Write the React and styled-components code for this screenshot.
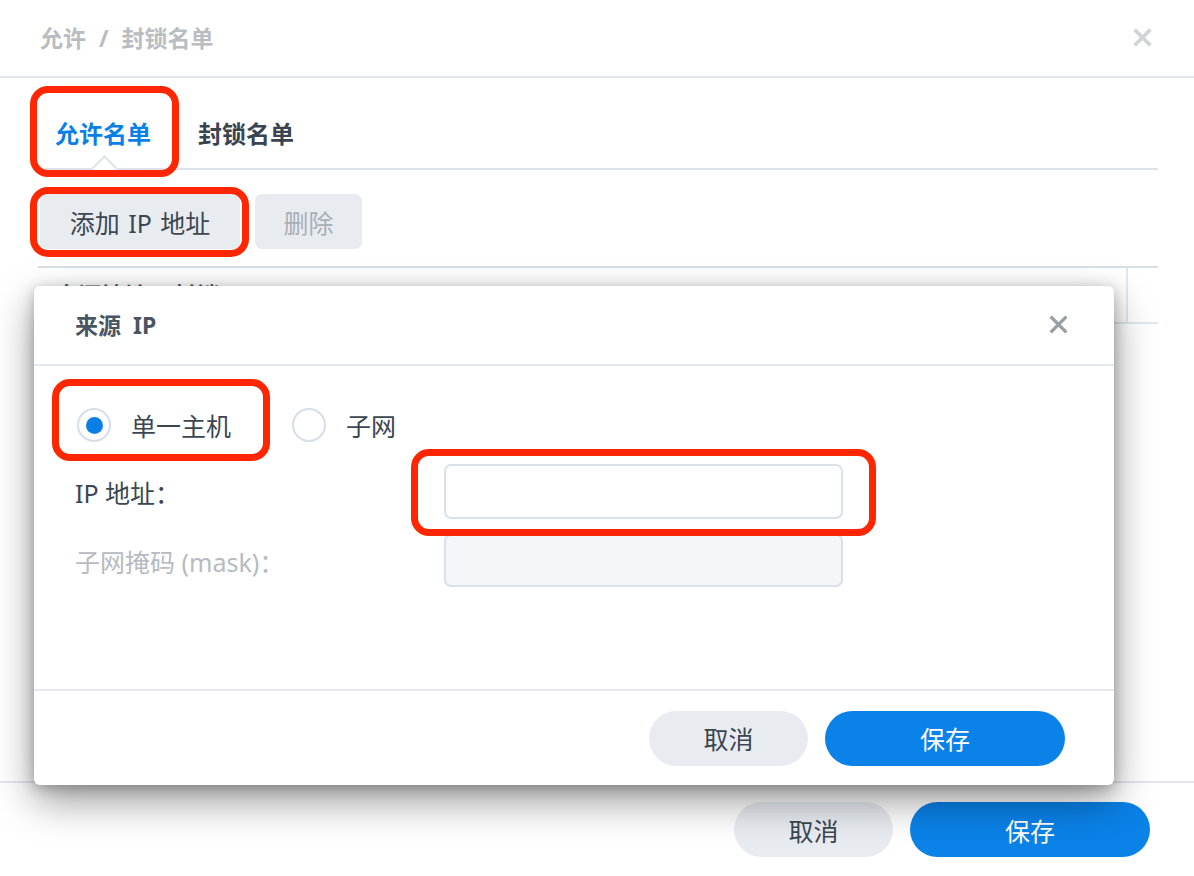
import React from 'react';
import styled, { createGlobalStyle } from 'styled-components';

const GlobalStyle = createGlobalStyle`
  html, body {
    margin: 0;
    padding: 0;
    background: #fff;
  }
  body {
    font-family: "Noto Sans", "Noto Sans CJK SC", sans-serif;
    color: #3c4651;
  }
  * {
    box-sizing: border-box;
  }
`;

const CloseIcon = ({ size = 22, color = '#d3d5d8', stroke = 3.6 }) => (
  <svg width={size} height={size} viewBox="0 0 24 24" fill="none">
    <path d="M3 3L21 21M21 3L3 21" stroke={color} strokeWidth={stroke} strokeLinecap="butt" />
  </svg>
);

export default function App() {
  return (
    <>
      <GlobalStyle />
      <Page>
        <WindowHeader>
          <WindowTitle>允许 / 封锁名单</WindowTitle>
          <IconButton>
            <CloseIcon size={21} color="#d2d4d7" stroke={4.2} />
          </IconButton>
        </WindowHeader>

        <WindowBody>
          <TabBar>
            <Marked $inset="8px -11px -9px -8px">
              <Tab $active>允许名单</Tab>
            </Marked>
            <Tab>封锁名单</Tab>
          </TabBar>

          <Toolbar>
            <Marked $inset="-7px -9px -8px -10px">
              <ToolButton>添加 IP 地址</ToolButton>
            </Marked>
            <ToolButton $disabled>删除</ToolButton>
          </Toolbar>

          <TableHead>
            <HeadCell $width="1090px">
              <span>来源地址</span>
              <span>封锁</span>
            </HeadCell>
            <HeadCell />
          </TableHead>
          <TableArea />
        </WindowBody>

        <WindowFooter>
          <PillButton>取消</PillButton>
          <PillButton $primary $wide>保存</PillButton>
        </WindowFooter>

        <Modal>
          <ModalHeader>
            <ModalTitle>来源 IP</ModalTitle>
            <IconButton>
              <CloseIcon size={21} color="#989ea5" stroke={3.8} />
            </IconButton>
          </ModalHeader>

          <ModalBody>
            <RadioRow>
              <Marked $inset="-29px -39px -19px -25px">
                <RadioItem>
                  <RadioCircle $checked />
                  <span>单一主机</span>
                </RadioItem>
              </Marked>
              <RadioItem>
                <RadioCircle />
                <span>子网</span>
              </RadioItem>
            </RadioRow>

            <FormGrid>
              <FieldLabel>IP 地址：</FieldLabel>
              <Marked $inset="-15px -33px -17px -33px">
                <TextInput />
              </Marked>
              <FieldLabel $disabled>子网掩码 (mask)：</FieldLabel>
              <TextInput $disabled $height="53px" />
            </FormGrid>
          </ModalBody>

          <ModalFooter>
            <PillButton>取消</PillButton>
            <PillButton $primary $wide>保存</PillButton>
          </ModalFooter>
        </Modal>
      </Page>
    </>
  );
}

const Page = styled.div`
  position: relative;
  width: 1194px;
  height: 876px;
  overflow: hidden;
  display: flex;
  flex-direction: column;
  background: #fff;
`;

const WindowHeader = styled.div`
  height: 78px;
  flex: none;
  display: flex;
  align-items: center;
  justify-content: space-between;
  padding: 0 41px 2px 40px;
  border-bottom: 2px solid #e1e6ee;
`;

const WindowTitle = styled.div`
  font-size: 23px;
  font-weight: 700;
  color: #b9bdc2;
  word-spacing: 7px;
`;

const IconButton = styled.div`
  display: flex;
  align-items: center;
  justify-content: center;
`;

const WindowBody = styled.div`
  flex: 1;
  display: flex;
  flex-direction: column;
  padding: 0 36px 0 38px;
`;

const TabBar = styled.div`
  height: 92px;
  flex: none;
  display: flex;
  align-items: stretch;
  gap: 13px;
  border-bottom: 2px solid #dde3ea;
`;

const Tab = styled.div`
  position: relative;
  height: 90px;
  display: flex;
  align-items: center;
  padding: 18px 17px 0 17px;
  font-size: 24px;
  font-weight: 700;
  color: ${(p) => (p.$active ? '#0a7fe6' : '#3a444f')};

  ${(p) =>
    p.$active &&
    `
    &::after {
      content: '';
      position: absolute;
      left: 50%;
      bottom: -10px;
      width: 17px;
      height: 17px;
      margin-left: -8px;
      background: #fff;
      border-left: 2px solid #dde3ea;
      border-top: 2px solid #dde3ea;
      transform: rotate(45deg);
    }
  `}
`;

const Marked = styled.div`
  position: relative;
  display: flex;

  &::before {
    content: '';
    position: absolute;
    inset: ${(p) => p.$inset};
    border: 7px solid #ff2600;
    border-radius: 18px;
    pointer-events: none;
    z-index: 2;
  }
`;

const Toolbar = styled.div`
  display: flex;
  gap: 15px;
  padding: 24px 0 0 2px;
`;

const ToolButton = styled.div`
  height: 55px;
  display: flex;
  align-items: center;
  justify-content: center;
  min-width: ${(p) => (p.$disabled ? '107px' : '200px')};
  border-radius: 7px;
  background: #e8ecf1;
  font-size: 25px;
  color: ${(p) => (p.$disabled ? '#a9aeb4' : '#3c4651')};
  word-spacing: 2px;
`;

const TableHead = styled.div`
  margin-top: 17px;
  height: 58px;
  display: flex;
  border-top: 2px solid #d8dfe7;
  border-bottom: 2px solid #e3e8ef;
`;

const HeadCell = styled.div`
  width: ${(p) => p.$width || 'auto'};
  flex: ${(p) => (p.$width ? 'none' : '1')};
  display: flex;
  align-items: flex-start;
  gap: 26px;
  padding: 16px 0 0 17px;
  font-size: 23px;
  line-height: 23px;
  font-weight: 700;
  color: #4a535d;
  border-right: ${(p) => (p.$width ? '2px solid #e3e8ef' : 'none')};
`;

const TableArea = styled.div`
  flex: 1;
`;

const WindowFooter = styled.div`
  height: 95px;
  flex: none;
  display: flex;
  justify-content: flex-end;
  align-items: flex-start;
  gap: 17px;
  padding: 19px 44px 0 0;
  border-top: 2px solid #e1e6ee;
`;

const PillButton = styled.div`
  width: ${(p) => (p.$wide ? '240px' : '159px')};
  height: 55px;
  border-radius: 28px;
  display: flex;
  align-items: center;
  justify-content: center;
  font-size: 25px;
  background: ${(p) => (p.$primary ? '#0a82e8' : '#e8ecf1')};
  color: ${(p) => (p.$primary ? '#ffffff' : '#3c4651')};
`;

const Modal = styled.div`
  position: absolute;
  left: 34px;
  top: 286px;
  width: 1080px;
  height: 499px;
  display: flex;
  flex-direction: column;
  background: #fff;
  border-radius: 6px;
  box-shadow: 0 16px 40px rgba(0, 0, 0, 0.4), 0 3px 14px rgba(0, 0, 0, 0.25);
  z-index: 5;
`;

const ModalHeader = styled.div`
  height: 80px;
  flex: none;
  display: flex;
  align-items: center;
  justify-content: space-between;
  padding: 0 45px 2px 41px;
  border-bottom: 2px solid #e4e9f1;
`;

const ModalTitle = styled.div`
  font-size: 23px;
  font-weight: 700;
  color: #4a5561;
  word-spacing: 6px;
`;

const ModalBody = styled.div`
  flex: 1;
  display: flex;
  flex-direction: column;
  padding: 42px 0 0 41px;
`;

const RadioRow = styled.div`
  display: flex;
  gap: 61px;
  padding-left: 2px;
`;

const RadioItem = styled.div`
  height: 34px;
  display: flex;
  align-items: center;
  gap: 20px;
  font-size: 25px;
  color: #3c4651;
`;

const RadioCircle = styled.span`
  width: 34px;
  height: 34px;
  border-radius: 50%;
  border: 2px solid #d6dee7;
  background: #fff;
  display: flex;
  align-items: center;
  justify-content: center;

  &::after {
    content: '';
    width: 17px;
    height: 17px;
    border-radius: 50%;
    background: ${(p) => (p.$checked ? '#0a7fe6' : 'transparent')};
  }
`;

const FormGrid = styled.div`
  margin-top: 22px;
  display: grid;
  grid-template-columns: 369px 399px;
  row-gap: 15px;
  align-items: center;
`;

const FieldLabel = styled.div`
  font-size: 25px;
  color: ${(p) => (p.$disabled ? '#b6bbc1' : '#3c4651')};
`;

const TextInput = styled.div`
  width: 399px;
  height: ${(p) => p.$height || '55px'};
  border-radius: 7px;
  border: 2px solid #d9e1ea;
  background: ${(p) => (p.$disabled ? '#f4f6f9' : '#ffffff')};
`;

const ModalFooter = styled.div`
  height: 96px;
  flex: none;
  display: flex;
  justify-content: flex-end;
  align-items: center;
  gap: 17px;
  padding: 0 49px 0 0;
  border-top: 2px solid #e4e9f1;
`;
